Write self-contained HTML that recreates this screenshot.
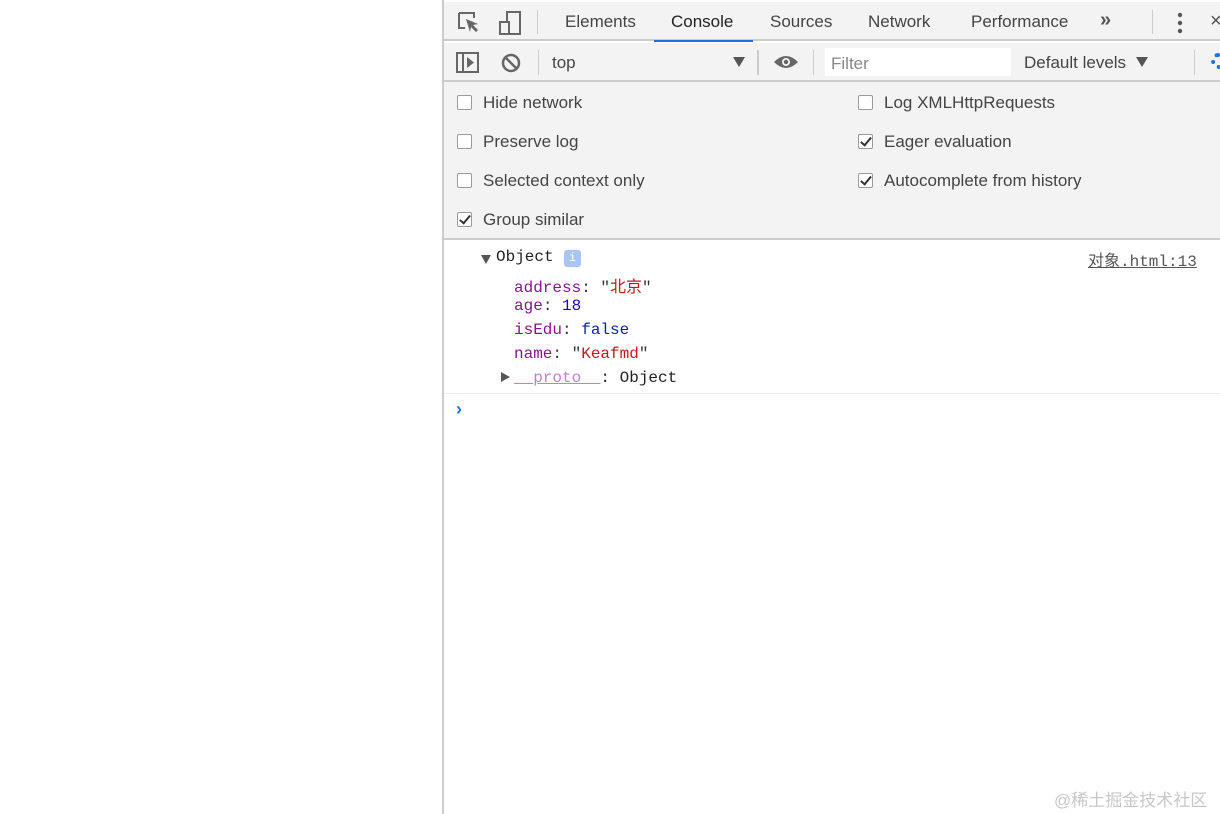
<!DOCTYPE html><html><head><meta charset="utf-8"><style>
*{margin:0;padding:0;box-sizing:border-box}
body{width:1220px;height:814px;background:#fff;position:relative;overflow:hidden;font-family:"Liberation Sans","Noto Sans CJK SC",sans-serif;color:#333}
.a{position:absolute;white-space:nowrap}
.sans{font-size:17px;color:#444}
.mono{font-family:"Liberation Mono","Noto Sans CJK SC",monospace;font-size:16px}
.cb{position:absolute;width:15px;height:15px;border:1px solid #9a9a9a;border-radius:2px;background:#fff}
.cb.on{background:#fff}
.cb.on::after{content:"";position:absolute;left:4px;top:0px;width:4px;height:9px;border:solid #333;border-width:0 2px 2px 0;transform:rotate(40deg)}
.p{color:#881391}
</style></head><body>
<div class="a" style="left:442px;top:0;width:2px;height:814px;background:#ccc"></div>
<div class="a" style="left:444px;top:2px;width:776px;height:39px;background:#f3f3f3;border-bottom:2px solid #ccc"></div>
<div class="a" style="left:444px;top:43px;width:776px;height:39px;background:#f3f3f3;border-bottom:2px solid #ccc"></div>
<div class="a" style="left:444px;top:82px;width:776px;height:158px;background:#f3f3f3;border-bottom:2px solid #ccc"></div>
<!-- tab bar icons -->
<svg class="a" style="left:456px;top:10px" width="70" height="26" viewBox="0 0 70 26"><path d="M3 3h15v5M3 3v15h6" fill="none" stroke="#666" stroke-width="2"/><path d="M10 9l12 5-5 1 5 5-2 2-5-5-1 5z" fill="#666"/><rect x="51" y="2" width="13" height="22" fill="none" stroke="#666" stroke-width="2"/><rect x="44" y="12" width="9" height="12" fill="#f3f3f3" stroke="#666" stroke-width="2"/></svg>
<div class="a" style="left:537px;top:10px;width:1px;height:24px;background:#ccc"></div>
<div class="a sans" style="left:565px;top:12px">Elements</div>
<div class="a sans" style="left:671px;top:12px;color:#222">Console</div>
<div class="a" style="left:654px;top:40px;width:99px;height:2px;background:#1a73e8"></div>
<div class="a sans" style="left:770px;top:12px">Sources</div>
<div class="a sans" style="left:868px;top:12px">Network</div>
<div class="a sans" style="left:971px;top:12px">Performance</div>
<div class="a sans" style="left:1100px;top:9px;font-size:20px;font-weight:bold;color:#555">»</div>
<div class="a" style="left:1152px;top:10px;width:1px;height:24px;background:#ccc"></div>
<svg class="a" style="left:1175px;top:12px" width="10" height="22"><circle cx="5" cy="3" r="2.2" fill="#555"/><circle cx="5" cy="11" r="2.2" fill="#555"/><circle cx="5" cy="19" r="2.2" fill="#555"/></svg>
<div class="a sans" style="left:1210px;top:10px;font-size:20px;color:#555">×</div>
<!-- second bar -->
<svg class="a" style="left:456px;top:52px" width="70" height="22"><rect x="1" y="1" width="21" height="19" fill="none" stroke="#666" stroke-width="2"/><line x1="7" y1="1" x2="7" y2="20" stroke="#666" stroke-width="2"/><path d="M11 5l7 5.5-7 5.5z" fill="#666"/><circle cx="55" cy="11" r="8" fill="none" stroke="#666" stroke-width="2.5"/><line x1="49.5" y1="5.5" x2="60.5" y2="16.5" stroke="#666" stroke-width="2.5"/></svg>
<div class="a" style="left:538px;top:50px;width:1px;height:25px;background:#ccc"></div>
<div class="a sans" style="left:552px;top:53px">top</div>
<div class="a" style="left:733px;top:57px;border:6px solid transparent;border-top:10px solid #555;border-bottom:0"></div>
<div class="a" style="left:757px;top:50px;width:2px;height:25px;background:#ccc"></div>
<svg class="a" style="left:773px;top:53px" width="26" height="18"><path d="M1 9Q13 -3 25 9Q13 21 1 9z" fill="#666"/><circle cx="13" cy="9" r="4" fill="#f3f3f3"/><circle cx="13" cy="9" r="2.2" fill="#666"/></svg>
<div class="a" style="left:813px;top:50px;width:1px;height:25px;background:#ccc"></div>
<div class="a" style="left:825px;top:48px;width:186px;height:28px;background:#fff"></div>
<div class="a sans" style="left:831px;top:54px;color:#888">Filter</div>
<div class="a sans" style="left:1024px;top:53px">Default levels</div>
<div class="a" style="left:1136px;top:57px;border:6px solid transparent;border-top:10px solid #555;border-bottom:0"></div>
<div class="a" style="left:1194px;top:50px;width:1px;height:25px;background:#ccc"></div>
<div class="a" style="left:1211px;top:53px;width:14px;height:16px;border-radius:50%;border:4px dotted #1a73e8"></div>
<!-- settings -->
<div class="cb" style="left:457px;top:95px"></div><div class="a sans" style="left:483px;top:93px">Hide network</div>
<div class="cb" style="left:457px;top:134px"></div><div class="a sans" style="left:483px;top:132px">Preserve log</div>
<div class="cb" style="left:457px;top:173px"></div><div class="a sans" style="left:483px;top:171px">Selected context only</div>
<div class="cb on" style="left:457px;top:212px"></div><div class="a sans" style="left:483px;top:210px">Group similar</div>
<div class="cb" style="left:858px;top:95px"></div><div class="a sans" style="left:884px;top:93px">Log XMLHttpRequests</div>
<div class="cb on" style="left:858px;top:134px"></div><div class="a sans" style="left:884px;top:132px">Eager evaluation</div>
<div class="cb on" style="left:858px;top:173px"></div><div class="a sans" style="left:884px;top:171px">Autocomplete from history</div>
<!-- console -->
<div class="a" style="left:481px;top:255px;border:5px solid transparent;border-top:9px solid #555;border-bottom:0;border-left-width:5.5px;border-right-width:5.5px"></div>
<div class="a mono" style="left:496px;top:248px;color:#222">Object</div>
<div class="a" style="left:564px;top:250px;width:17px;height:17px;background:#a8c4f0;border-radius:3px;color:#fff;font-size:12px;text-align:center;line-height:17px;font-family:'Liberation Mono',monospace">i</div>
<div class="a mono" style="left:1088px;top:247px;color:#555;text-decoration:underline">对象.html:13</div>
<div class="a mono" style="left:514px;top:273px"><span class="p">address</span>: "<span style="color:#c41a16">北京</span>"</div>
<div class="a mono" style="left:514px;top:297px"><span class="p">age</span>: <span style="color:#1c00cf">18</span></div>
<div class="a mono" style="left:514px;top:321px"><span class="p">isEdu</span>: <span style="color:#0d22aa">false</span></div>
<div class="a mono" style="left:514px;top:345px"><span class="p">name</span>: "<span style="color:#c41a16">Keafmd</span>"</div>
<div class="a" style="left:501px;top:372px;border:5px solid transparent;border-left:9px solid #555;border-right:0;border-top-width:5.5px;border-bottom-width:5.5px"></div>
<div class="a mono" style="left:514px;top:369px;color:#222"><span style="color:#c080d0;text-decoration:underline">__proto__</span>: Object</div>
<div class="a" style="left:444px;top:393px;width:776px;height:1px;background:#eee"></div>
<div class="a" style="left:456px;top:399px;color:#1a73e8;font-size:18px;font-weight:bold">›</div>
<div class="a" style="left:1054px;top:786px;font-size:17px;color:#c8c8c8">@稀土掘金技术社区</div>
</body></html>
